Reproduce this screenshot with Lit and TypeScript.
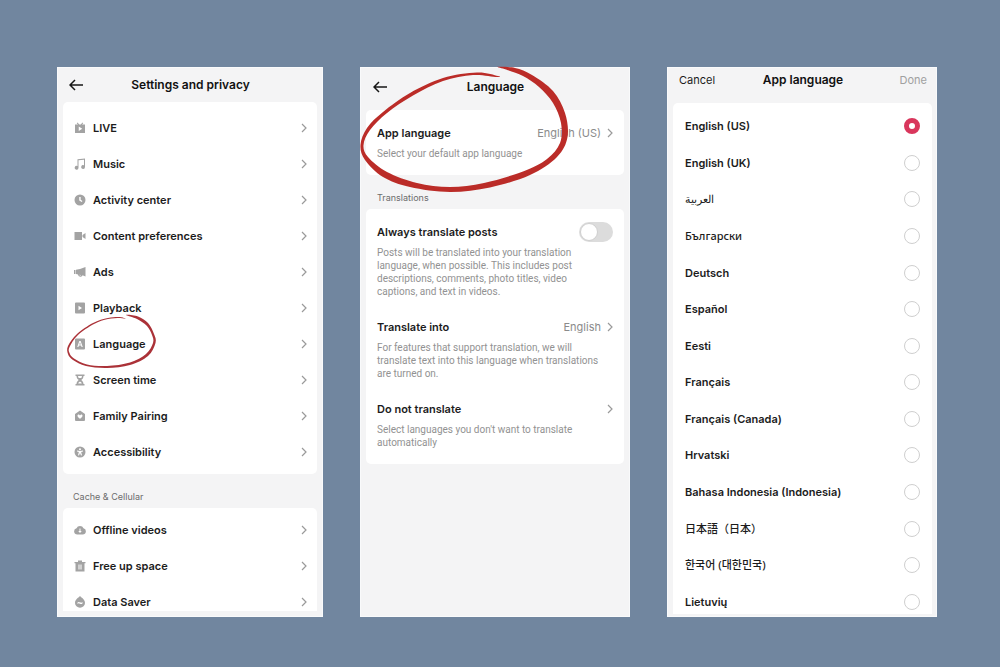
import { LitElement, html, svg, css } from "lit";
import { customElement, state } from "lit/decorators.js";

type Point = [number, number];

/** Closed smooth curve through the given points. */
function smoothLoop(points: Point[]): string {
  const n = points.length;
  const at = (i: number) => points[(i + n) % n];
  let d = `M${points[0][0]} ${points[0][1]}`;
  for (let i = 0; i < n; i++) {
    const [p0, p1, p2, p3] = [at(i - 1), at(i), at(i + 1), at(i + 2)];
    const c1 = [p1[0] + (p2[0] - p0[0]) / 6, p1[1] + (p2[1] - p0[1]) / 6];
    const c2 = [p2[0] - (p3[0] - p1[0]) / 6, p2[1] - (p3[1] - p1[1]) / 6];
    d += `C${c1.map((v) => v.toFixed(2)).join(" ")} ${c2.map((v) => v.toFixed(2)).join(" ")} ${p2[0]} ${p2[1]}`;
  }
  return d + "Z";
}

// Outer edge of the brush stroke, then back along its inner edge.
const BIG_LOOP: Point[] = [
  [148, 16], [127, 12.5], [93, 18], [60, 33], [33, 52], [17, 68], [10.5, 85], [15, 100],
  [33, 117], [60, 127], [100, 132], [140, 127.5], [180, 115], [207, 97], [217.5, 77],
  [215, 53], [203, 31], [182, 15], [165, 8], [147, 7],
  [156, 9.5], [173, 16], [189, 27], [203, 43], [211, 63], [210, 83], [197, 99], [173, 111.5],
  [134, 123], [100, 127], [67, 123], [37, 112], [18, 97], [13.5, 85], [20, 70], [37, 53],
  [63, 35.5], [93, 21], [123, 15], [147, 17],
];
const SMALL_LOOP: Point[] = [
  [69, 12], [63, 10], [51, 11], [36, 16], [20, 27], [11, 39], [11, 47], [16, 53], [29, 59],
  [50, 61], [73, 58], [91, 49], [98.5, 36], [97, 27], [91, 16], [81, 9.5], [69, 8],
  [80, 12], [90, 19], [95, 28], [96, 36], [89, 47], [73, 55.5], [50, 59], [30, 57.5],
  [17, 51.500], [12.500, 46], [12.500, 40], [21, 28], [37, 17], [51, 12], [63, 11],
];

const icons: Record<string, unknown> = {
  live: svg`<path fill-rule="evenodd" d="M7 1l3.500 4h3L17 1l1.500 1.300L16 5h6v17H2V5h6L5.500 2.300zM9.500 9v9l7-4.500z"/>`,
  music: svg`<path d="M7 2.500L22 1v17a3.800 3.800 0 1 1-2-3.300V3.500L9 4.600v14.900a3.800 3.800 0 1 1-2-3.300z"/>`,
  clock: svg`<path fill-rule="evenodd" d="M12 1a11 11 0 1 1 0 22 11 11 0 0 1 0-22zm-1.500 5v7l5 3 1.400-2.200-3.600-2.200V6z"/>`,
  camera: svg`<path d="M1 4h15v16H1zM17 10l6-4v12l-6-4z"/>`,
  ads: svg`<path fill-rule="evenodd" d="M0 8h3v8H0zM4 7.500l8-1.500L23 2v19l-6-2.500C16 22.500 9 23 8 17l-4-1zM10.500 17.500c.5 2 3 2 3.500.4z"/>`,
  playback: svg`<path fill-rule="evenodd" d="M4 1h16a2 2 0 0 1 2 2v18a2 2 0 0 1-2 2H4a2 2 0 0 1-2-2V3a2 2 0 0 1 2-2zm5 6.500v9l7-4.500z"/>`,
  language: svg`<path fill-rule="evenodd" d="M4 1h16a2 2 0 0 1 2 2v18a2 2 0 0 1-2 2H4a2 2 0 0 1-2-2V3a2 2 0 0 1 2-2zm6.700 5L6.500 18h2.300l.9-3h4.600l.9 3h2.300L13.300 6zm1.300 2.500l1.600 4.500h-3.200z"/>`,
  hourglass: svg`<path fill-rule="evenodd" d="M3 1h18v3h-2c0 4-2 6-4.500 8 2.500 2 4.500 4 4.500 8h2v3H3v-3h2c0-4 2-6 4.500-8C7 10 5 8 5 4H3zm5 3c.2 2 .8 3 1.500 4h5c.7-1 1.300-2 1.500-4zm4 11c-1.800 1-3 2-3.500 4h7c-.5-2-1.700-3-3.500-4z"/>`,
  family: svg`<path fill-rule="evenodd" d="M12 1l10 7v12a2 2 0 0 1-2 2H4a2 2 0 0 1-2-2V8zm0 9.800C10 7.500 6.500 9 7 12c.4 2.500 3 4 5 5.500 2-1.500 4.600-3 5-5.500.5-3-3-4.500-5-1.200z"/>`,
  accessibility: svg`<path fill-rule="evenodd" d="M12 1a11 11 0 1 1 0 22 11 11 0 0 1 0-22zm0 3.500a2 2 0 1 0 0 4 2 2 0 0 0 0-4zM6 9v2l3.700 1L8 18.500l2 .7 2-5 2 5 2-.7-1.700-6.500L18 11V9l-6 1z"/>`,
  cloud: svg`<path fill-rule="evenodd" d="M6.500 21a6.300 6.300 0 0 1-1.500-12.400 7.500 7.500 0 0 1 14 0A6.300 6.300 0 0 1 17.500 21zm4.500-12v5H8.500l3.500 4 3.500-4H13V9z"/>`,
  trash: svg`<path fill-rule="evenodd" d="M8 1h8v3h7v2.500h-2V23H3V6.500H1V4h7zm1 8v10h2V9zm4 0v10h2V9z"/>`,
  drop: svg`<path fill-rule="evenodd" d="M12 0c2 3 10 6 10 14a10 9.500 0 0 1-20 0C2 6 10 3 12 0zM7 13v3c2-2.500 3.500-1 5-.3s3.500.8 5-.7v-3c-2 2-3.500 1.300-5 .6S8.500 11 7 13z"/>`,
};

const chevron = html`<svg class="chevron" viewBox="0 0 6 10" aria-hidden="true">
  <path d="M1 1l4 4-4 4" />
</svg>`;

const backArrow = html`<svg class="arrow" viewBox="0 0 14 12" aria-hidden="true">
  <path d="M6 1L1 6l5 5M1 6h13" />
</svg>`;

const shared = css`
  :host {
    display: flex;
    flex-direction: column;
    position: relative;
    min-width: 0;
    min-height: 0;
    box-sizing: border-box;
    padding: 0 5px 5px;
    background: #f4f4f5;
    border: 1px solid #f9fafb;
    font-family: Inter, "Noto Sans", "Noto Sans CJK JP", "Noto Sans CJK KR", sans-serif;
    font-size: 11px;
    line-height: 16px;
    color: #1c1c1c;
  }
  * {
    box-sizing: border-box;
  }
  button {
    font: inherit;
    color: inherit;
    background: none;
    border: 0;
    padding: 0;
    text-align: left;
    cursor: pointer;
  }
  h1, h2, p, ul {
    margin: 0;
    padding: 0;
    font: inherit;
    list-style: none;
  }
  header {
    display: grid;
    grid-template-columns: 1fr auto 1fr;
    align-items: center;
    flex: none;
    padding: 0 5px 0 6px;
  }
  h1 {
    font-size: 12px;
    font-weight: 600;
    color: #111;
  }
  h2 {
    display: flex;
    align-items: center;
    height: 34px;
    padding: 12px 11px 0 10px;
    font-size: 9px;
    color: #6c6c6c;
    flex: none;
  }
  .body {
    flex: 1;
    min-height: 0;
    overflow: hidden;
  }
  .card {
    background: #fff;
    border-radius: 5px;
  }
  .back {
    display: flex;
    justify-self: start;
  }
  .arrow {
    width: 14px;
    height: 12px;
    fill: none;
    stroke: #161616;
    stroke-width: 1.5;
  }
  .chevron {
    width: 6px;
    height: 10px;
    flex: none;
    fill: none;
    stroke: #9a9a9a;
    stroke-width: 1.2;
  }
  .mark {
    position: absolute;
    pointer-events: none;
    overflow: visible;
    width: 1px;
    height: 1px;
  }
`;

@customElement("settings-panel")
class SettingsPanel extends LitElement {
  static styles = [
    shared,
    css`
      header {
        height: 34px;
      }
      .list {
        padding: 8px 10px 4px 11px;
      }
      .cache {
        padding-top: 4px;
      }
      .row {
        display: flex;
        align-items: center;
        gap: 7px;
        width: 100%;
        height: 36px;
      }
      .name {
        flex: 1;
        font-weight: 600;
      }
      .icon {
        width: 12px;
        height: 12px;
        fill: #a3a3a3;
      }
      .mark {
        left: -1px;
        top: 239px;
        fill: #ab3238;
      }
    `,
  ];

  private row = ([icon, name]: string[]) => html`<li>
    <button class="row">
      <svg class="icon" viewBox="0 0 24 24" aria-hidden="true">${icons[icon]}</svg>
      <span class="name">${name}</span>
      ${chevron}
    </button>
  </li>`;

  render() {
    const content = [
      ["live", "LIVE"], ["music", "Music"], ["clock", "Activity center"],
      ["camera", "Content preferences"], ["ads", "Ads"], ["playback", "Playback"],
      ["language", "Language"], ["hourglass", "Screen time"], ["family", "Family Pairing"],
      ["accessibility", "Accessibility"],
    ];
    const cache = [["cloud", "Offline videos"], ["trash", "Free up space"], ["drop", "Data Saver"]];
    return html`
      <header>
        <button class="back" aria-label="Back">${backArrow}</button>
        <h1>Settings and privacy</h1>
      </header>
      <div class="body">
        <ul class="card list">${content.map(this.row)}</ul>
        <h2>Cache &amp; Cellular</h2>
        <ul class="card list cache">${cache.map(this.row)}</ul>
      </div>
      <svg class="mark" aria-hidden="true"><path d=${smoothLoop(SMALL_LOOP)} /></svg>
    `;
  }
}

@customElement("language-panel")
class LanguagePanel extends LitElement {
  static styles = [
    shared,
    css`
      header {
        height: 42px;
        padding: 0 6px 4px 7px;
      }
      h2 {
        padding-left: 11px;
      }
      .card {
        display: flex;
        flex-direction: column;
        gap: 21px;
        padding: 15px 11px;
      }
      .line {
        display: flex;
        align-items: center;
        gap: 6px;
        width: 100%;
        height: 16px;
      }
      .name {
        flex: 1;
        font-weight: 600;
      }
      .value {
        color: #8b8b8b;
      }
      .note {
        margin-top: 6px;
        padding-right: 6px;
        font-family: Roboto, sans-serif;
        font-size: 10px;
        line-height: 13px;
        color: #929292;
      }
      .beside {
        padding-right: 34px;
      }
      .switch {
        appearance: none;
        display: flex;
        align-items: center;
        width: 34px;
        height: 20px;
        margin: 0;
        padding: 1px;
        border-radius: 10px;
        background: #dcdcdc;
      }
      .switch::before {
        content: "";
        width: 18px;
        height: 18px;
        border-radius: 50%;
        border: 1px solid #cfcfcf;
        box-sizing: border-box;
        background: #fff;
      }
      .switch:checked {
        justify-content: flex-end;
        background: #e0345c;
      }
      .mark {
        left: -11px;
        top: -8px;
        fill: #bb2c28;
      }
    `,
  ];

  render() {
    return html`
      <header>
        <button class="back" aria-label="Back">${backArrow}</button>
        <h1>Language</h1>
      </header>
      <div class="body">
        <section class="card">
          <div>
            <button class="line">
              <span class="name">App language</span><span class="value">English (US)</span>${chevron}
            </button>
            <p class="note">Select your default app language</p>
          </div>
        </section>
        <h2>Translations</h2>
        <section class="card">
          <div>
            <div class="line">
              <label class="name" for="always">Always translate posts</label>
              <input class="switch" id="always" type="checkbox" role="switch" />
            </div>
            <p class="note beside">
              Posts will be translated into your translation language, when possible. This includes
              post descriptions, comments, photo titles, video captions, and text in videos.
            </p>
          </div>
          <div>
            <button class="line">
              <span class="name">Translate into</span><span class="value">English</span>${chevron}
            </button>
            <p class="note">
              For features that support translation, we will translate text into this language when
              translations are turned on.
            </p>
          </div>
          <div>
            <button class="line"><span class="name">Do not translate</span>${chevron}</button>
            <p class="note">Select languages you don't want to translate automatically</p>
          </div>
        </section>
      </div>
      <svg class="mark" aria-hidden="true"><path d=${smoothLoop(BIG_LOOP)} /></svg>
    `;
  }
}

@customElement("picker-panel")
class PickerPanel extends LitElement {
  static styles = [
    shared,
    css`
      :host {
        padding: 0 4px 2px 5px;
      }
      header {
        height: 35px;
        padding-bottom: 12px;
      }
      .done {
        justify-self: end;
        color: #a0a0a0;
      }
      .body {
        display: flex;
        flex-direction: column;
      }
      .card {
        display: flex;
        flex-direction: column;
        flex: 1;
        margin-bottom: -6px;
        padding: 5px 12px 0 12px;
      }
      .option {
        display: flex;
        align-items: center;
        justify-content: space-between;
        flex: 1 0 36px;
        font-weight: 600;
      }
      .plain {
        font-family: "Noto Sans", "Noto Sans CJK JP", "Noto Sans CJK KR", sans-serif;
        font-weight: 500;
      }
      .radio {
        appearance: none;
        width: 16px;
        height: 16px;
        margin: 0;
        border: 1px solid #cfcfcf;
        border-radius: 50%;
        background: #fff;
      }
      .radio:checked {
        border: 5px solid #d9365c;
      }
    `,
  ];

  @state() private selected = "en-US";

  render() {
    const languages = [
      ["en-US", "English (US)"], ["en-GB", "English (UK)"], ["ar", "العربية"],
      ["bg", "Български"], ["de", "Deutsch"], ["es", "Español"], ["et", "Eesti"],
      ["fr", "Français"], ["fr-CA", "Français (Canada)"], ["hr", "Hrvatski"],
      ["id", "Bahasa Indonesia (Indonesia)"], ["ja", "日本語（日本）"],
      ["ko", "한국어 (대한민국)"], ["lt", "Lietuvių"],
    ];
    const plain = ["ar", "bg", "ja", "ko"];
    return html`
      <header>
        <button>Cancel</button>
        <h1>App language</h1>
        <button class="done">Done</button>
      </header>
      <div class="body">
        <div class="card" role="radiogroup" aria-label="App language">
          ${languages.map(
            ([code, name]) => html`<label class="option ${plain.includes(code) ? "plain" : ""}">
              <span lang=${code}>${name}</span>
              <input class="radio" type="radio" name="language" .checked=${this.selected === code}
                @change=${() => (this.selected = code)} />
            </label>`,
          )}
        </div>
      </div>
    `;
  }
}

@customElement("app-root")
class AppRoot extends LitElement {
  static styles = css`
    :host {
      display: grid;
      grid-template-columns: 266fr 270fr 270fr;
      grid-template-rows: minmax(0, 1fr);
      gap: 37px;
      box-sizing: border-box;
      height: 100vh;
      padding: 67px 63px 50px 57px;
      background: #71869f;
    }
  `;

  render() {
    return html`
      <settings-panel></settings-panel>
      <language-panel></language-panel>
      <picker-panel></picker-panel>
    `;
  }
}
